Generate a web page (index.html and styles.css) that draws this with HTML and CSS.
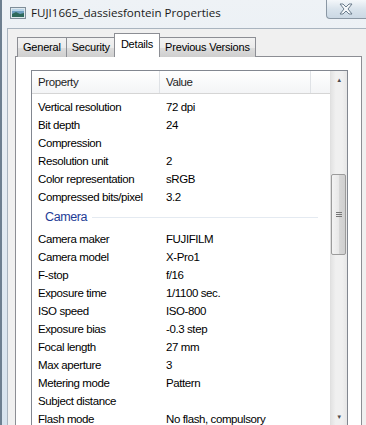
FILE: index.html
```html
<!DOCTYPE html>
<html lang="en">

<head>
    <meta charset="UTF-8">
    <meta name="viewport" content="width=device-width, initial-scale=1.0">
    <title>FUJI1665_dassiesfontein Properties</title>
    <link rel="stylesheet" href="styles.css">
</head>

<body>
    <div class="window">
        <!-- Title bar -->
        <div class="titlebar">
            <svg class="app-icon" width="16" height="12" viewBox="0 0 16 12">
                <rect x="0.5" y="0.5" width="15" height="11" fill="#dfe9ee" stroke="#7f8e99"/>
                <rect x="2" y="2" width="12" height="8" fill="#6f9fc0"/>
                <path d="M2 7 L6 5 L10 7 L14 6 L14 10 L2 10 Z" fill="#2f6a5c"/>
                <rect x="2" y="2" width="12" height="2" fill="#b8d4e8"/>
            </svg>
            <span class="title">FUJI1665_dassiesfontein Properties</span>
            <button class="close-btn">
                <svg width="16" height="12" viewBox="0 0 16 12">
                    <path d="M2 1 L5 1 L8 4 L11 1 L14 1 L10 6 L14 11 L11 11 L8 8 L5 11 L2 11 L6 6 Z" fill="#f4f7fa" stroke="#6b7c8c" stroke-width="1"/>
                </svg>
            </button>
        </div>

        <!-- Client area -->
        <div class="client">
            <div class="tabs">
                <div class="tab">General</div>
                <div class="tab">Security</div>
                <div class="tab active">Details</div>
                <div class="tab">Previous Versions</div>
            </div>

            <div class="panel">
                <div class="listview">
                    <div class="list-content">
                        <div class="list-header">
                            <div class="col">Property</div>
                            <div class="col">Value</div>
                            <div class="col"></div>
                        </div>
                        <div class="rows">
                            <div class="row"><span>Vertical resolution</span><span>72 dpi</span></div>
                            <div class="row"><span>Bit depth</span><span>24</span></div>
                            <div class="row"><span>Compression</span><span></span></div>
                            <div class="row"><span>Resolution unit</span><span>2</span></div>
                            <div class="row"><span>Color representation</span><span>sRGB</span></div>
                            <div class="row"><span>Compressed bits/pixel</span><span>3.2</span></div>
                            <div class="group"><span>Camera</span><div class="group-line"></div></div>
                            <div class="row"><span>Camera maker</span><span>FUJIFILM</span></div>
                            <div class="row"><span>Camera model</span><span>X-Pro1</span></div>
                            <div class="row"><span>F-stop</span><span>f/16</span></div>
                            <div class="row"><span>Exposure time</span><span>1/1100 sec.</span></div>
                            <div class="row"><span>ISO speed</span><span>ISO-800</span></div>
                            <div class="row"><span>Exposure bias</span><span>-0.3 step</span></div>
                            <div class="row"><span>Focal length</span><span>27 mm</span></div>
                            <div class="row"><span>Max aperture</span><span>3</span></div>
                            <div class="row"><span>Metering mode</span><span>Pattern</span></div>
                            <div class="row"><span>Subject distance</span><span></span></div>
                            <div class="row"><span>Flash mode</span><span>No flash, compulsory</span></div>
                        </div>
                    </div>

                    <!-- Vertical scrollbar -->
                    <div class="scrollbar">
                        <div class="arrow up">&#9650;</div>
                        <div class="track">
                            <div class="thumb"><span class="grip"></span></div>
                        </div>
                        <div class="arrow down">&#9660;</div>
                    </div>
                </div>
            </div>
        </div>
    </div>
</body>

</html>
```

FILE: styles.css
```css
body {
    margin: 0;
    padding: 0;
    width: 366px;
    height: 425px;
    overflow: hidden;
    font-family: "Liberation Sans", Arial, sans-serif;
    background-color: #dbe5ef;
}

.window {
    height: 425px;
    background: linear-gradient(to bottom, #eef2f6, #d7e3ee);
    border-left: 2px solid #6d7f90;
    box-sizing: border-box;
}

.titlebar {
    position: relative;
    height: 28px;
    display: flex;
    align-items: center;
    padding-left: 8px;
    padding-bottom: 3px;
    box-sizing: border-box;
}

.app-icon {
    margin-right: 5px;
}

.title {
    font-family: "Open Sans", sans-serif;
    font-size: 11.6px;
    color: #1a1a1a;
}

.close-btn {
    position: absolute;
    top: 0;
    right: -6px;
    width: 46px;
    height: 19px;
    border: 1px solid #8a97a4;
    border-top: none;
    border-radius: 0 0 0 4px;
    background: linear-gradient(to bottom, #f4f7fa, #d9e3ec 50%, #cbd8e4);
    padding: 0;
    display: flex;
    align-items: center;
    justify-content: center;
    padding-right: 6px;
}

.client {
    margin-left: 5px;
    height: 397px;
    background-color: #f0f0f0;
    border-left: 1px solid #a9b4bf;
    border-top: 1px solid #a9b4bf;
    padding-top: 5px;
    padding-left: 7px;
    box-sizing: border-box;
}

.tabs {
    display: flex;
    align-items: flex-end;
    height: 23px;
    padding-left: 2px;
    position: relative;
    z-index: 1;
}

.tab {
    height: 20px;
    box-sizing: border-box;
    border: 1px solid #8c8e94;
    border-bottom: none;
    padding: 3px 5px 0 5px;
    font-size: 11px;
    letter-spacing: -0.2px;
    color: #000;
    background: linear-gradient(to bottom, #f2f2f2, #ebebeb 50%, #dddddd 51%, #cfcfcf);
    margin-right: -1px;
    white-space: nowrap;
}

.tab.active {
    height: 24px;
    background: #fff;
    padding: 4px 6px 0 6px;
    margin-left: -1px;
    margin-right: -1px;
    position: relative;
    z-index: 2;
}

.panel {
    width: 347px;
    height: 370px;
    margin-top: -1px;
    background: #fff;
    border: 1px solid #8c8e94;
    box-sizing: border-box;
    padding: 13px 13px 0 15px;
}

.listview {
    display: flex;
    width: 317px;
    height: 356px;
    border: 1px solid #828790;
    box-sizing: border-box;
    font-size: 11.5px;
    letter-spacing: -0.4px;
    color: #000;
}

.list-content {
    flex: 1;
    overflow: hidden;
}

.list-header {
    display: grid;
    grid-template-columns: 128px 151px 1fr;
    height: 23px;
    background: linear-gradient(to bottom, #ffffff, #f3f4f6);
    border-bottom: 1px solid #d5d5d5;
    box-sizing: border-box;
}

.list-header .col {
    padding: 5px 0 0 6px;
    border-right: 1px solid #dfe2e6;
    color: #1e1e1e;
}

.list-header .col:last-child {
    border-right: none;
}

.rows {
    padding-top: 4px;
}

.row {
    display: grid;
    grid-template-columns: 128px 151px;
    height: 18px;
    line-height: 18px;
}

.row span {
    padding-left: 6px;
    white-space: nowrap;
}

.group {
    display: flex;
    align-items: center;
    height: 24px;
    padding: 0 0 2px 13px;
    box-sizing: border-box;
    color: #1e3c96;
    font-size: 12.5px;
}

.group-line {
    flex: 1;
    height: 1px;
    background: #e4eaf1;
    margin: 1px 12px 0 5px;
}

.scrollbar {
    width: 17px;
    display: flex;
    flex-direction: column;
    background: linear-gradient(to right, #e3e3e3, #f0f0f0 30%, #f0f0f0 70%, #e6e6e6);
    border-left: 1px solid #e0e0e0;
    box-sizing: border-box;
}

.arrow {
    height: 17px;
    font-size: 6px;
    color: #4d4d4d;
    display: flex;
    align-items: center;
    justify-content: center;
}

.track {
    flex: 1;
    position: relative;
}

.thumb {
    position: absolute;
    top: 86px;
    left: 0;
    right: 1px;
    height: 81px;
    border: 1px solid #9b9b9b;
    border-radius: 2px;
    background: linear-gradient(to right, #f3f3f3, #e8e8e8 50%, #d8d8d8 51%, #cfcfcf);
    box-sizing: border-box;
    display: flex;
    align-items: center;
    justify-content: center;
}

.grip {
    width: 6px;
    height: 5px;
    border-top: 1px solid #777;
    border-bottom: 1px solid #777;
    box-sizing: border-box;
    position: relative;
}

.grip::after {
    content: "";
    position: absolute;
    left: 0;
    right: 0;
    top: 1px;
    border-top: 1px solid #777;
}
```
